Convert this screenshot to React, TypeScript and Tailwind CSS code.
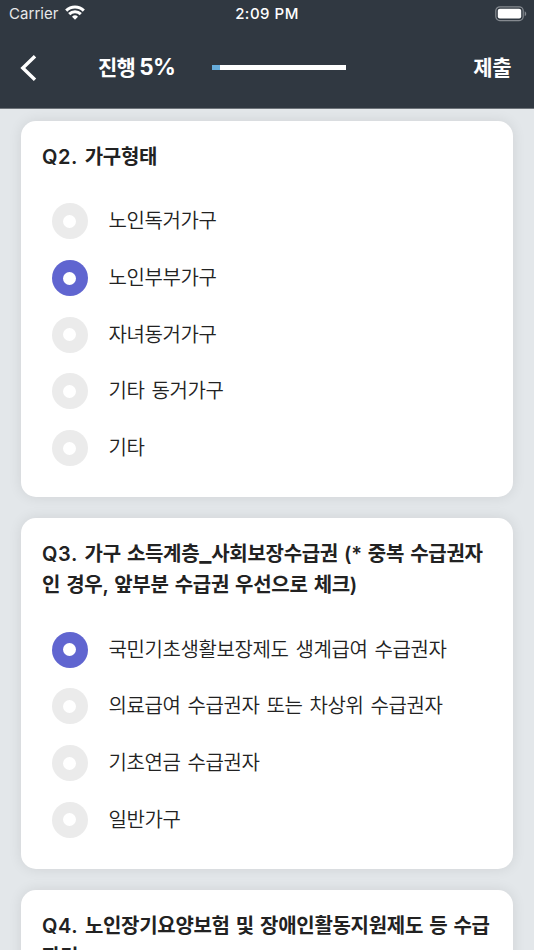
import React from "react";

interface Question {
    id: string;
    label: string;
    title: string[];
    options: string[];
    selected?: number;
}

const questions: Question[] = [
    {
        id: "q2",
        label: "Q2.",
        title: ["가구형태"],
        options: [
            "노인독거가구",
            "노인부부가구",
            "자녀동거가구",
            "기타 동거가구",
            "기타",
        ],
        selected: 1,
    },
    {
        id: "q3",
        label: "Q3.",
        title: [
            "가구 소득계층_사회보장수급권 (* 중복 수급권자",
            "인 경우, 앞부분 수급권 우선으로 체크)",
        ],
        options: [
            "국민기초생활보장제도 생계급여 수급권자",
            "의료급여 수급권자 또는 차상위 수급권자",
            "기초연금 수급권자",
            "일반가구",
        ],
        selected: 0,
    },
    {
        id: "q4",
        label: "Q4.",
        title: ["노인장기요양보험 및 장애인활동지원제도 등 수급", "자격"],
        options: [],
    },
];

export default function App() {
    const [answers, setAnswers] = React.useState<
        Record<string, number | undefined>
    >(Object.fromEntries(questions.map((q) => [q.id, q.selected])));

    return (
        <main className="h-[950px] w-full overflow-hidden flex flex-col bg-[#e3e7ea] font-['Inter','Noto_Sans_CJK_KR',sans-serif] text-[#222]">
            <header className="h-[108.5px] shrink-0 bg-[#303841] border-b border-[#6d7379] text-white">
                <StatusBar />
                <NavBar progress={5} />
            </header>
            <div className="flex flex-col gap-[21px] px-[21px] pt-[12px]">
                {questions.map((question) => (
                    <QuestionCard
                        key={question.id}
                        question={question}
                        answer={answers[question.id]}
                        onChange={(v) =>
                            setAnswers({ ...answers, [question.id]: v })
                        }
                    />
                ))}
            </div>
        </main>
    );
}

function StatusBar() {
    return (
        <div className="h-[27px] grid grid-cols-3 items-center pl-[9px] pr-[7px] leading-none">
            <div className="flex items-center gap-[6px] text-[15px] tracking-[0.05px] text-[#e8e9ea]">
                Carrier
                <svg
                    className="w-[20px] h-[15px] -mt-[2px]"
                    viewBox="0 0 20 15"
                    fill="none"
                    stroke="white"
                    strokeWidth="3"
                >
                    <path d="M1.2 5.6a12.6 12.6 0 0 1 17.6 0" />
                    <path d="M4.2 9.1a8.2 8.2 0 0 1 11.6 0" />
                    <path
                        d="M10 14.8 7 11.8a4.3 4.3 0 0 1 6 0z"
                        fill="white"
                        stroke="none"
                    />
                </svg>
            </div>
            <div className="pr-[2px] text-center text-[15px] font-medium tracking-[0.5px]">
                2:09 PM
            </div>
            <svg
                className="w-[32px] h-[16px] justify-self-end"
                viewBox="0 0 32 16"
            >
                <rect
                    x="0.8"
                    y="0.8"
                    width="27.4"
                    height="13.8"
                    rx="4"
                    fill="none"
                    stroke="#858a90"
                    strokeWidth="1.2"
                />
                <rect
                    x="2.8"
                    y="2.8"
                    width="23.4"
                    height="9.8"
                    rx="2"
                    fill="white"
                />
                <path d="M29.7 5.2v5c2-.8 2-4.2 0-5z" fill="#858a90" />
            </svg>
        </div>
    );
}

function NavBar({ progress }: { progress: number }) {
    return (
        <div className="h-[81px] flex items-center pl-[20px] pr-[23px]">
            <button className="w-[78px]">
                <svg
                    className="w-[17px] h-[26px]"
                    viewBox="0 0 17 26"
                    fill="none"
                    stroke="white"
                    strokeWidth="3.4"
                >
                    <path d="M15 1.2 2.8 13 15 24.8" />
                </svg>
            </button>
            <div className="w-[113.5px] pb-[1px] text-[21px] font-bold tracking-[-0.8px] whitespace-nowrap leading-none">
                진행{" "}
                <span className="text-[22.5px] tracking-[-0.6px]">
                    {progress}%
                </span>
            </div>
            <div className="w-[134px] h-[5px] bg-white">
                <div
                    className="h-full bg-[#67addb]"
                    style={{ width: `${progress + 1}%` }}
                ></div>
            </div>
            <button className="ml-auto text-[21px] font-bold leading-none tracking-[-0.5px]">
                제출
            </button>
        </div>
    );
}

function QuestionCard({
    question,
    answer,
    onChange,
}: {
    question: Question;
    answer?: number;
    onChange: (v: number) => void;
}) {
    return (
        <section className="rounded-[15px] bg-white px-[21px] pt-[21.5px] pb-[20.5px] shadow-[0_0_14px_rgba(0,0,0,0.09)]">
            <h2 className="mb-[20px] text-[20px] leading-[31px] font-semibold tracking-[-0.3px] [word-spacing:1.4px] whitespace-nowrap">
                {question.title.map((line, i) => (
                    <div key={line} className="h-[31px]">
                        {i === 0 && (
                            <span className="tracking-[0.6px]">
                                {question.label}{" "}
                            </span>
                        )}
                        <TitleText text={line} />
                    </div>
                ))}
            </h2>
            {question.options.map((option, i) => (
                <button
                    key={option}
                    className="h-[56.7px] w-full flex items-center gap-[20.5px] pl-[10px] text-left"
                    onClick={() => onChange(i)}
                >
                    <span
                        className={
                            "h-[36px] w-[36px] shrink-0 rounded-full flex items-center justify-center " +
                            (answer === i ? "bg-[#6065d0]" : "bg-[#ebebeb]")
                        }
                    >
                        <span className="mr-[1px] h-[13px] w-[13px] rounded-full bg-white"></span>
                    </span>
                    <span className="text-[20px] leading-[30px] font-[350] tracking-[-0.4px] [word-spacing:1.8px] whitespace-nowrap">
                        {option}
                    </span>
                </button>
            ))}
        </section>
    );
}

// underscores are drawn a bit wider than the rest of the title
function TitleText({ text }: { text: string }) {
    const parts = text.split("_");

    return (
        <>
            {parts.map((part, i) => (
                <React.Fragment key={i}>
                    {i > 0 && (
                        <span className="text-[26px] leading-none">_</span>
                    )}
                    {part}
                </React.Fragment>
            ))}
        </>
    );
}
